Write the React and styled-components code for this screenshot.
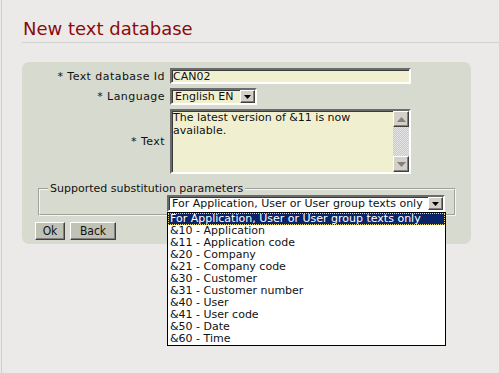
import React from "react";
import styled, { createGlobalStyle } from "styled-components";

const GlobalStyle = createGlobalStyle`
  html, body {
    margin: 0;
    padding: 0;
    background: #ebeae8;
  }
  body {
    font-family: "DejaVu Sans", Verdana, sans-serif;
    font-size: 11px;
    color: #111;
  }
`;

const Page = styled.div`
  margin-left: 1px;
  border-left: 1px solid #cfcfcb;
  min-height: 373px;
  box-sizing: border-box;
  padding: 18px 0 0 20px;
`;

const Title = styled.h1`
  margin: 0;
  padding: 0 0 3px 1px;
  font-family: "DejaVu Sans", Verdana, sans-serif;
  font-weight: normal;
  font-size: 18px;
  line-height: 21px;
  color: #8b0a0a;
  border-bottom: 1px solid #d2d2d0;
`;

const Panel = styled.div`
  margin-top: 19px;
  width: 449px;
  background: #d7dbcf;
  border-radius: 7px;
  padding: 6px 0 4px 0;
  box-sizing: border-box;
`;

const FormGrid = styled.div`
  display: grid;
  grid-template-columns: 143px auto;
  column-gap: 5px;
  row-gap: 4px;
  align-items: center;
`;

const Label = styled.div`
  text-align: right;
  white-space: nowrap;
  letter-spacing: 0.45px;
`;

const Inset = styled.div`
  box-sizing: border-box;
  background: #f0f0d0;
  border: 2px solid;
  border-color: #6b6b6b #fff #fff #6b6b6b;
  box-shadow: inset 1px 1px 0 #3a3a3a;
`;

const TextInput = styled(Inset)`
  width: ${p => p.$w}px;
  height: 16px;
  padding: 0 1px;
  line-height: 13px;
`;

const SelectBox = styled(Inset)`
  position: relative;
  display: flex;
  align-items: center;
  width: ${p => p.$w}px;
  height: 17px;
  padding-left: 3px;
  background: ${p => p.$bg || "#f0f0d0"};
  line-height: 13px;
`;

const SelectText = styled.span`
  flex: 1;
  white-space: nowrap;
`;

const ArrowBtn = styled.div`
  width: 15px;
  height: 13px;
  box-sizing: border-box;
  background: #d4d0c8;
  border: 1px solid;
  border-color: #fff #404040 #404040 #fff;
  box-shadow: inset -1px -1px 0 #808080;
  display: flex;
  align-items: center;
  justify-content: center;
  svg { display: block; }
`;

const TextAreaBox = styled(Inset)`
  display: flex;
  width: 241px;
  height: 65px;
`;

const TextAreaText = styled.div`
  flex: 1;
  padding: 0 1px;
  line-height: 13px;
`;

const ScrollBar = styled.div`
  width: 16px;
  display: flex;
  flex-direction: column;
  justify-content: space-between;
  background-color: #e6e6e6;
  background-image:
    linear-gradient(45deg, #c8c8c8 25%, transparent 25%, transparent 75%, #c8c8c8 75%),
    linear-gradient(45deg, #c8c8c8 25%, transparent 25%, transparent 75%, #c8c8c8 75%);
  background-size: 2px 2px;
  background-position: 0 0, 1px 1px;
`;

const ScrollBtn = styled(ArrowBtn)`
  width: 16px;
  height: 16px;
  background: #d4d0c8;
`;

const Fieldset = styled.fieldset`
  margin: 9px 0 0 16px;
  width: 418px;
  height: 33px;
  box-sizing: border-box;
  padding: 0;
  border: 2px groove #f4f4f0;
  position: relative;
`;

const Legend = styled.legend`
  padding: 0 2px;
  margin-left: 8px;
  line-height: 12px;
  text-align: left;
`;

const FieldSelect = styled(SelectBox)`
  margin-left: 127px;
`;

const DropList = styled.div`
  position: absolute;
  left: -2px;
  top: 15px;
  width: 279px;
  box-sizing: border-box;
  background: #fff;
  border: 1px solid #000;
  z-index: 5;
`;

const Option = styled.div`
  height: 12px;
  line-height: 12px;
  padding-left: 2px;
  white-space: nowrap;
  box-sizing: border-box;
  ${p =>
    p.$selected &&
    `
    background: #0a246a;
    color: #fff;
    outline: 1px dotted #e8d67c;
    outline-offset: -1px;
  `}
`;

const ButtonRow = styled.div`
  display: flex;
  gap: 5px;
  margin: 6px 0 0 13px;
`;

const Button = styled.button`
  height: 18px;
  min-width: ${p => p.$w}px;
  box-sizing: border-box;
  padding: 0 6px;
  font-family: "DejaVu Sans Condensed", "DejaVu Sans", sans-serif;
  font-size: 12px;
  line-height: 14px;
  color: #111;
  background: #bfc2b5;
  border: 1px solid;
  border-color: #fff #404040 #404040 #fff;
  box-shadow: inset -1px -1px 0 #808080;
  cursor: pointer;
`;

const DownArrow = () => (
  <svg width="7" height="4" viewBox="0 0 7 4">
    <path d="M0 0h7L3.5 4z" fill="#000" />
  </svg>
);

const UpArrow = ({ color = "#808080" }) => (
  <svg width="9" height="5" viewBox="0 0 9 5">
    <path d="M0 5h9L4.5 0z" fill={color} />
  </svg>
);

const GreyDown = ({ color = "#808080" }) => (
  <svg width="9" height="5" viewBox="0 0 9 5">
    <path d="M0 0h9L4.5 5z" fill={color} />
  </svg>
);

const options = [
  "For Application, User or User group texts only",
  "&10 - Application",
  "&11 - Application code",
  "&20 - Company",
  "&21 - Company code",
  "&30 - Customer",
  "&31 - Customer number",
  "&40 - User",
  "&41 - User code",
  "&50 - Date",
  "&60 - Time",
];

export default function App() {
  return (
    <>
      <GlobalStyle />
      <Page>
        <Title>New text database</Title>
        <Panel>
          <FormGrid>
            <Label>* Text database Id</Label>
            <TextInput $w={241}>CAN02</TextInput>
            <Label>* Language</Label>
            <SelectBox $w={87}>
              <SelectText>English EN</SelectText>
              <ArrowBtn>
                <DownArrow />
              </ArrowBtn>
            </SelectBox>
            <Label>* Text</Label>
            <TextAreaBox>
              <TextAreaText>The latest version of &amp;11 is now available.</TextAreaText>
              <ScrollBar>
                <ScrollBtn>
                  <UpArrow />
                </ScrollBtn>
                <ScrollBtn>
                  <GreyDown />
                </ScrollBtn>
              </ScrollBar>
            </TextAreaBox>
          </FormGrid>
          <Fieldset>
            <Legend>Supported substitution parameters</Legend>
            <FieldSelect $w={278} $bg="#fff">
              <SelectText>{options[0]}</SelectText>
              <ArrowBtn>
                <DownArrow />
              </ArrowBtn>
              <DropList>
                {options.map((o, i) => (
                  <Option key={o} $selected={i === 0}>
                    {o}
                  </Option>
                ))}
              </DropList>
            </FieldSelect>
          </Fieldset>
          <ButtonRow>
            <Button $w={30}>Ok</Button>
            <Button $w={46}>Back</Button>
          </ButtonRow>
        </Panel>
      </Page>
    </>
  );
}
